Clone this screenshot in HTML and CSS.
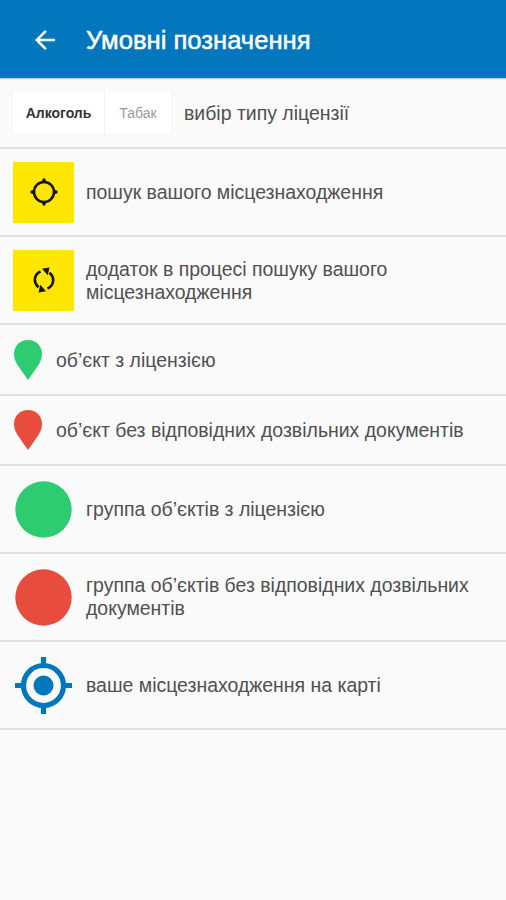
FILE: index.html
```html
<!DOCTYPE html>
<html lang="uk">
<head>
<meta charset="utf-8">
<title>Умовні позначення</title>
<link rel="stylesheet" href="styles.css">
</head>
<body>
<header class="bar">
  <svg class="back" viewBox="0 0 20 20"><path d="M20 8.75H4.8l7-7L10 0 0 10l10 10 1.8-1.75-7-7H20z"/></svg>
  <h1 class="title">Умовні позначення</h1>
</header>
<ul class="legend">
  <li class="row row-tabs">
    <div class="tabs"><span class="tab tab-active">Алкоголь</span><span class="tab">Табак</span></div>
    <span class="label">вибір типу ліцензії</span>
  </li>
  <li class="row">
    <div class="tile"><svg class="locate" viewBox="0 0 28 28"><circle cx="14" cy="14" r="10" fill="none" stroke="#171600" stroke-width="2.6"/><path fill="#171600" d="M12.800 .5h2.400L16.500 5h-5zM12.800 27.500h2.400L16.500 23h-5zM.5 12.800v2.400L5 16.500v-5zM27.500 12.800v2.400L23 16.500v-5z"/></svg></div>
    <span class="label">пошук вашого місцезнаходження</span>
  </li>
  <li class="row">
    <div class="tile"><svg class="sync" viewBox="0 0 22 26"><g fill="none" stroke="#171600" stroke-width="2.600"><path d="M7.500 4.500C.8 7.500 0 15.500 5.500 20.200"/><path d="M14.500 21.500C21.200 18.500 22 10.500 16.500 5.800"/></g><path fill="#171600" d="M9 1.800L16.500 .5 14.800 8.300zM13 24.200L5.500 25.500 7.200 17.700z"/></svg></div>
    <span class="label">додаток в процесі пошуку вашого<br>місцезнаходження</span>
  </li>
  <li class="row row-pin">
    <svg class="pin green" viewBox="0 0 28 40"><path d="M14 0C6 0 0 6 0 14c0 4.500 1.600 7.500 3.500 11L14 40l10.500-15c1.900-3.500 3.500-6.500 3.500-11C28 6 22 0 14 0z"/></svg>
    <span class="label">об’єкт з ліцензією</span>
  </li>
  <li class="row row-pin last-pin">
    <svg class="pin red" viewBox="0 0 28 40"><path d="M14 0C6 0 0 6 0 14c0 4.500 1.600 7.500 3.500 11L14 40l10.500-15c1.900-3.500 3.500-6.500 3.500-11C28 6 22 0 14 0z"/></svg>
    <span class="label">об’єкт без відповідних дозвільних документів</span>
  </li>
  <li class="row">
    <svg class="dot green" viewBox="0 0 61 61"><circle cx="30.500" cy="30.500" r="28.200"/></svg>
    <span class="label">группа об’єктів з ліцензією</span>
  </li>
  <li class="row">
    <svg class="dot red" viewBox="0 0 61 61"><circle cx="30.500" cy="30.500" r="28.200"/></svg>
    <span class="label label-wide">группа об’єктів без відповідних дозвільних<br>документів</span>
  </li>
  <li class="row">
    <svg class="dot" viewBox="0 0 61 61"><circle cx="30.500" cy="30.500" r="20" fill="none" stroke="#0277bd" stroke-width="5.200"/><circle cx="30.500" cy="30.500" r="10" fill="#0277bd"/><path fill="none" stroke="#0277bd" stroke-width="5.200" d="M30.500 2v8M30.500 51v8M2 30.500h8M51 30.500h8"/></svg>
    <span class="label">ваше місцезнаходження на карті</span>
  </li>
</ul>
</body>
</html>
```
FILE: styles.css
```css
* { box-sizing: border-box; }
body { margin: 0; min-height: 900px; background: #fafafa; font-family: "Liberation Sans", Arial, sans-serif; color: #505050; }
.bar { height: 78px; padding: 1px 0 0 35px; display: flex; align-items: center; background: #0277bd; box-shadow: 0 1px 1px #b4cedd; }
.back { width: 20px; height: 20px; margin-right: 31px; fill: #fff; }
.title { margin: 0; font-size: 25.600px; line-height: 28px; font-weight: 400; color: #fff; -webkit-text-stroke: .5px #fff; white-space: nowrap; }
.legend { margin: 0; padding: 0; list-style: none; }
.row { height: 88px; padding-left: 13px; display: flex; align-items: center; border-bottom: 2px solid #e0e0e0; }
.row-tabs, .row-pin { height: 71px; }
.last-pin { height: 70px; }
.label { margin-left: 12px; padding-top: 2px; font-size: 19.470px; line-height: 23.500px; white-space: nowrap; }
.label-wide { padding-top: 0; }
.tabs { width: 158px; height: 43px; display: flex; background: #fff; border-radius: 3px; box-shadow: 0 0 2px #ececec; }
.tabs + .label { margin-left: 13px; }
.tab { width: 66px; display: flex; align-items: center; justify-content: center; font-size: 14px; color: #999; }
.tab-active { width: 92px; color: #333; font-weight: 700; border-right: 1px solid #f0f0f0; }
.tile { width: 61px; height: 61px; display: flex; align-items: center; justify-content: center; background: #fee600; }
.locate { width: 28px; height: 28px; }
.sync { width: 22px; height: 26px; }
.pin { width: 28px; height: 40px; margin-left: 1px; }
.pin + .label { margin-left: 14px; }
.dot { width: 61px; height: 61px; }
.green { fill: #2ecc71; }
.red { fill: #e74c3c; }
```
